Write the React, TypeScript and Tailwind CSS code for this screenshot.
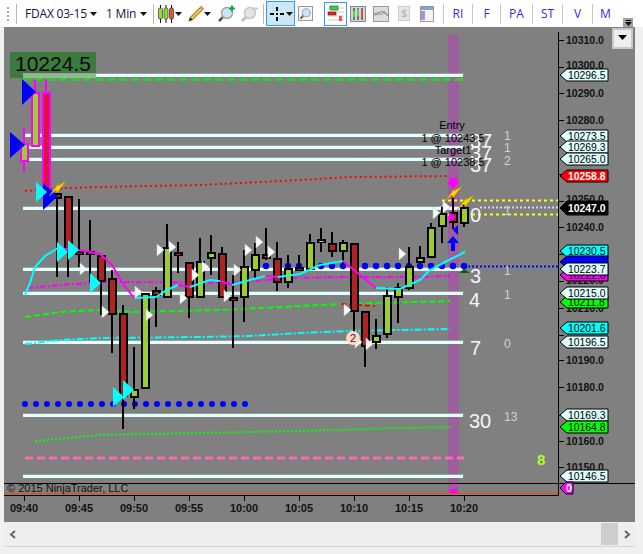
import React from "react";

const GREEN = "#9acd32";
const RED = "#b22222";
// x index, wick top, wick bottom, body top, body bottom, colour
const candles: [number, number, number, number, number, string][] = [
  [3, 193, 277, 193, 199, RED],
  [4, 196, 277, 196, 253, RED],
  [5, 199, 267, 251, 255, RED],
  [6, 220, 282, 251, 255, RED],
  [7, 255, 315, 255, 282, RED],
  [8, 270, 353, 278, 315, RED],
  [9, 305, 429, 313, 397, RED],
  [10, 347, 409, 389, 398, GREEN],
  [11, 293, 389, 293, 389, GREEN],
  [12, 287, 327, 290, 296, RED],
  [13, 224, 298, 247, 298, GREEN],
  [14, 242, 273, 252, 255, RED],
  [15, 262, 318, 262, 298, RED],
  [16, 238, 298, 261, 298, GREEN],
  [17, 235, 275, 252, 259, GREEN],
  [18, 247, 298, 253, 298, RED],
  [19, 275, 348, 297, 298, RED],
  [20, 250, 322, 266, 298, GREEN],
  [21, 243, 278, 254, 271, GREEN],
  [22, 228, 260, 254, 259, RED],
  [23, 242, 291, 258, 283, RED],
  [24, 255, 288, 268, 283, GREEN],
  [25, 255, 268, 267, 270, RED],
  [26, 234, 268, 242, 270, GREEN],
  [27, 228, 252, 239, 242, GREEN],
  [28, 232, 257, 243, 252, RED],
  [29, 240, 265, 242, 252, GREEN],
  [30, 243, 332, 243, 312, RED],
  [31, 311, 367, 311, 347, RED],
  [32, 319, 349, 335, 343, GREEN],
  [33, 287, 338, 295, 335, GREEN],
  [34, 283, 323, 287, 298, GREEN],
  [35, 247, 290, 266, 289, GREEN],
  [36, 246, 263, 257, 263, GREEN],
  [37, 223, 258, 227, 258, GREEN],
  [38, 207, 243, 213, 227, GREEN],
  [39, 196, 229, 212, 223, RED],
  [40, 202, 227, 207, 224, GREEN],
];
const cx = (i: number) => 24 + 11 * i;

const levels = [75, 135, 147, 159, 208, 269, 293, 342, 415, 476];

const whiteArrows: [number, number][] = [
  [160, 250], [172, 247], [83, 269], [195, 275], [205, 267], [105, 312], [138, 292], [149, 315], [183, 298],
  [227, 296], [237, 270], [248, 250], [259, 242], [271, 252], [347, 310], [358, 342], [369, 344], [402, 254],
  [436, 213], [446, 207],
];
const cyanArrows: [number, number][] = [
  [36, 192], [57, 252], [68, 250], [90, 283], [113, 397], [123, 390],
];

const axis: [string, number][] = [
  ["10310.0", 40], ["10300.0", 65], ["10290.0", 93], ["10280.0", 120], ["10250.0", 199], ["10240.0", 227],
  ["10220.0", 280], ["10210.0", 308], ["10190.0", 360], ["10180.0", 387], ["10160.0", 441], ["10150.0", 467],
];
const ticks = [40, 67, 93, 120, 147, 174, 201, 227, 254, 281, 308, 335, 360, 387, 415, 441, 467];

const tags: [string, number, string, string][] = [
  ["10296.5", 75, "#e0ffff", "#000"],
  ["10273.5", 136, "#e0ffff", "#000"],
  ["10269.3", 147, "#e0ffff", "#000"],
  ["10265.0", 159, "#e0ffff", "#000"],
  ["10258.8", 176, "#ff0000", "#fff"],
  ["10247.0", 208, "#000000", "#fff"],
  ["10230.5", 251, "#00ffff", "#000"],
  ["", 262, "#0000ff", "#000"],
  ["10222.0", 275, "#ff00ff", "#000"],
  ["10223.7", 269, "#e0ffff", "#000"],
  ["10211.8", 302, "#00ff00", "#000"],
  ["10215.0", 293, "#e0ffff", "#000"],
  ["10201.6", 328, "#00ffff", "#000"],
  ["10196.5", 342, "#e0ffff", "#000"],
  ["10169.3", 415, "#e0ffff", "#000"],
  ["10164.8", 427, "#00ff00", "#000"],
  ["10146.5", 476, "#e0ffff", "#000"],
];

const times: [string, number][] = [
  ["09:40", 24], ["09:45", 79], ["09:50", 134], ["09:55", 189], ["10:00", 244], ["10:05", 299], ["10:10", 354], ["10:15", 409], ["10:20", 464],
];

const big: [string, number, number][] = [
  ["37", 470, 148], ["37", 470, 160], ["37", 470, 172], ["0", 470, 222], ["3", 470, 283], ["4", 469, 307], ["7", 470, 355], ["30", 469, 428],
];
const small: [string, number, number][] = [
  ["1", 504, 140], ["1", 504, 152], ["2", 504, 165], ["1", 504, 215], ["1", 504, 275], ["1", 504, 299], ["0", 504, 348], ["13", 504, 421],
];

const Bolt = ({ x, y }: { x: number; y: number }) => (
  <polygon
    points={`${x + 17},${y} ${x + 9},${y + 5} ${x + 10},${y + 2} ${x},${y + 15} ${x + 7},${y + 9} ${x + 8},${y + 12}`}
    fill="#ffd700"
    stroke="#b8860b"
    strokeWidth="0.5"
  />
);

const poly = (p: [number, number][]) => p.map((q) => q.join(",")).join(" ");

function Chart() {
  return (
    <svg className="absolute left-0 top-0" width="631" height="495" viewBox="4 27 631 495" fontFamily="'Liberation Sans', Arial, sans-serif">
      {/* order band */}
      <rect x="448" y="35" width="11" height="458" fill="#9c5f9c" />
      <rect x="450" y="489" width="7" height="4" fill="#ff00ff" />

      {/* levels */}
      <rect x="10" y="52" width="86" height="26" fill="#3d7a3d" />
      {levels.map((y) => (
        <g key={y}>
          <rect x="23" y={y - 2} width="441" height="1" fill="#9a9f9f" />
          <rect x="23" y={y - 1} width="440" height="3" fill="#e0ffff" />
        </g>
      ))}
      <rect x="23" y="74" width="73" height="4" fill="#8fb98f" />
      <text x="15" y="71" fontSize="21" fill="#0a0a0a">10224.5</text>

      <line x1="23" x2="464" y1="79.5" y2="79.5" stroke="#32cd32" strokeWidth="3" strokeDasharray="8 4" />
      <line x1="25" x2="464" y1="458" y2="458" stroke="#ff69b4" strokeWidth="3" strokeDasharray="8 4" />
      <line x1="442" x2="558" y1="200.5" y2="200.5" stroke="#ffff00" strokeWidth="2" strokeDasharray="3 3" />
      <line x1="442" x2="558" y1="214.5" y2="214.5" stroke="#ffff00" strokeWidth="2" strokeDasharray="3 3" />
      <line x1="480" x2="558" y1="207.5" y2="207.5" stroke="#d8d8d8" strokeWidth="2" strokeDasharray="2 2" />
      <line x1="464" x2="558" y1="266.5" y2="266.5" stroke="#0000ff" strokeWidth="2" strokeDasharray="2 2" />

      {/* indicators */}
      <polyline points={poly([[25, 191], [66, 188], [100, 187], [200, 185], [300, 180], [350, 177], [450, 176]])} fill="none" stroke="#ff0000" strokeWidth="2" strokeDasharray="2 3" />
      <polyline points={poly([[25, 317], [60, 312], [100, 310], [130, 312], [220, 310], [340, 304], [450, 301]])} fill="none" stroke="#00ff00" strokeWidth="2" strokeDasharray="6 3" />
      <line x1="341" x2="375" y1="304" y2="306" stroke="#ff0000" strokeWidth="2" strokeDasharray="5 3" />
      <polyline points={poly([[25, 344], [60, 340], [100, 338], [200, 337], [250, 336], [300, 333], [350, 331], [450, 329]])} fill="none" stroke="#00ffff" strokeWidth="2" strokeDasharray="7 2 2 2" />
      <polyline points={poly([[35, 441], [100, 435], [200, 433], [300, 431], [400, 428], [452, 427]])} fill="none" stroke="#00ff00" strokeWidth="2" strokeDasharray="2 2" />
      <polyline points={poly([[28, 288], [60, 285], [90, 283], [120, 282], [232, 283], [290, 278], [340, 277], [420, 277], [450, 276]])} fill="none" stroke="#ff00ff" strokeWidth="2" strokeDasharray="6 2 2 2" />

      {/* dots */}
      {Array.from({ length: 21 }, (_, i) => (
        <circle key={i} cx={25 + 11 * i} cy="404" r="3" fill="#0000ff" />
      ))}
      {Array.from({ length: 20 }, (_, i) => (
        <circle key={i} cx={255 + 11 * i} cy="266" r="3.2" fill="#0000ff" />
      ))}

      {/* first three bars with magenta outline */}
      <rect x="23" y="127" width="2" height="45" fill="#ff00ff" />
      <rect x="20" y="143" width="9" height="19" fill="#ff00ff" />
      <rect x="22" y="145" width="5" height="15" fill={GREEN} />
      <rect x="34" y="80" width="2" height="12" fill="#ff00ff" />
      <rect x="31" y="92" width="9" height="55" fill="#ff00ff" />
      <rect x="33" y="94" width="5" height="51" fill={GREEN} />
      <rect x="45" y="80" width="2" height="12" fill="#ff00ff" />
      <rect x="42" y="92" width="9" height="100" fill="#ff00ff" />
      <rect x="44" y="94" width="5" height="100" fill="#dc143c" />

      {/* candles */}
      <g shapeRendering="crispEdges">
        {candles.map(([i, hi, lo, top, bot, c]) => (
          <g key={i}>
            <rect x={cx(i) - 1} y={hi} width="2" height={lo - hi} fill="#000" />
            <rect x={cx(i) - 4} y={top} width="9" height={Math.max(bot - top, 4)} fill="#000" />
            <rect x={cx(i) - 2} y={top + 2} width="5" height={Math.max(bot - top - 4, 1)} fill={c} />
          </g>
        ))}
      </g>

      {/* moving average */}
      <polyline points={poly([[25, 295], [30, 283], [35, 267], [45, 256], [58, 248]])} fill="none" stroke="#00ffff" strokeWidth="2" />
      <polyline points={poly([[58, 248], [85, 251], [100, 254], [112, 265], [122, 282], [134, 298]])} fill="none" stroke="#ff00ff" strokeWidth="2" />
      <polyline points={poly([[135, 298], [156, 297], [167, 290], [178, 285]])} fill="none" stroke="#00ffff" strokeWidth="2" />
      <polyline points={poly([[178, 285], [190, 287]])} fill="none" stroke="#ff00ff" strokeWidth="2" />
      <polyline points={poly([[190, 287], [210, 280], [220, 281]])} fill="none" stroke="#00ffff" strokeWidth="2" />
      <polyline points={poly([[220, 281], [232, 285]])} fill="none" stroke="#ff00ff" strokeWidth="2" />
      <polyline points={poly([[232, 285], [250, 280], [265, 276]])} fill="none" stroke="#00ffff" strokeWidth="2" />
      <polyline points={poly([[266, 276], [278, 277]])} fill="none" stroke="#ff00ff" strokeWidth="2" />
      <polyline points={poly([[278, 277], [300, 274], [320, 265], [343, 261]])} fill="none" stroke="#00ffff" strokeWidth="2" />
      <polyline points={poly([[343, 261], [360, 275], [376, 288]])} fill="none" stroke="#ff00ff" strokeWidth="2" />
      <polyline points={poly([[376, 288], [400, 289], [420, 280], [430, 270], [445, 262], [465, 252]])} fill="none" stroke="#00ffff" strokeWidth="2" />

      {/* markers */}
      <polygon points="22,79 36,92 22,105" fill="#0000ff" />
      <polygon points="10,132 25,145 10,158" fill="#0000ff" />
      <polygon points="43,183 58,196 43,210" fill="#0000ff" />
      {cyanArrows.map(([x, y]) => (
        <polygon key={`${x}-${y}`} points={`${x},${y - 10} ${x + 11},${y} ${x},${y + 10}`} fill="#00ffff" />
      ))}
      {whiteArrows.map(([x, y]) => (
        <polygon key={`${x}-${y}`} points={`${x - 3},${y - 6} ${x + 4},${y} ${x - 3},${y + 6}`} fill="#fafafa" stroke="#c8c8c8" strokeWidth="0.5" />
      ))}
      <Bolt x={49} y={181} />
      <Bolt x={445} y={186} />
      <Bolt x={457} y={195} />
      <polygon points="449,178 457,178 457,182 459,182 453,189 447,182 449,182" fill="#ff00ff" />
      <polygon points="451,251 455,251 455,243 459,243 453,236 447,243 451,243" fill="#0000ff" />
      <polygon points="449,212 456,217 449,222" fill="#ff00ff" />
      <polygon points="458,225 458,235 453,230" fill="#0000ff" />
      <polygon points="459,273 464,269 470,273" fill="#006400" />

      <circle cx="353" cy="338" r="7" fill="#ffdab9" />
      <text x="350" y="342" fontSize="11" fill="#4b0082">2</text>

      {big.map(([t, x, y], i) => (
        <text key={i} x={x} y={y} fontSize="20" fill="#f5f5f5">{t}</text>
      ))}
      {small.map(([t, x, y], i) => (
        <text key={i} x={x} y={y} fontSize="12" fill="#d3d3d3">{t}</text>
      ))}
      {/* trade labels */}
      <g fontSize="11" fill="#000" textAnchor="middle">
        <text x="452" y="129">Entry</text>
        <text x="453" y="142">1 @ 10243.5</text>
        <text x="453" y="154">Target1</text>
        <text x="453" y="166">1 @ 10238.5</text>
      </g>
      <text x="537" y="465" fontSize="15" fontWeight="700" fill="#adff2f">8</text>

      {/* axes */}
      <rect x="558" y="32" width="1" height="464" fill="#000" />
      <rect x="4" y="483" width="631" height="1" fill="#000" />
      <rect x="4" y="495" width="555" height="1" fill="#000" />
      <rect x="5" y="493" width="553" height="1" fill="#ff4500" />
      {ticks.map((y) => (
        <rect key={y} x="559" y={y} width="5" height="1" fill="#000" />
      ))}
      {axis.map(([t, y]) => (
        <text key={t} x="566" y={y + 4} fontSize="10.5" fontWeight="700" fill="#111">{t}</text>
      ))}
      {tags.map(([t, y, bg, fg]) => {
        const h = fg === "#fff" && bg === "#000000" ? 7 : 6;
        return (
          <g key={t + y}>
            <polygon points={`560,${y} 567,${y - h} 608,${y - h} 608,${y + h} 567,${y + h}`} fill={bg} stroke="#000" strokeWidth="1" />
            <text x="568" y={y + 4} fontSize="10.4" fontWeight={fg === "#fff" ? 700 : 400} fill={fg}>{t}</text>
          </g>
        );
      })}
      <polygon points="560,488 566,482 573,482 573,494 566,494" fill="#ff00ff" stroke="#000" strokeWidth="1" />
      <text x="566" y="492" fontSize="11" fontWeight="700" fill="#fff">0</text>

      {times.map(([t, x]) => (
        <g key={t}>
          <rect x={x} y="496" width="1" height="5" fill="#000" />
          <text x={x} y="512" fontSize="11" fontWeight="700" fill="#111" textAnchor="middle">{t}</text>
        </g>
      ))}
      <text x="7" y="492" fontSize="11" fill="#111">© 2015 NinjaTrader, LLC</text>
    </svg>
  );
}

const Caret = () => (
  <svg width="7" height="4" viewBox="0 0 7 4" className="block shrink-0">
    <polygon points="0,0 7,0 3.5,4" fill="#111" />
  </svg>
);

const Magnifier = ({ grey, plus, size = 18 }: { grey?: boolean; plus?: boolean; size?: number }) => (
  <svg width={size} height={size} viewBox="0 0 18 18" className="block shrink-0">
    <line x1="2" y1="16" x2="7" y2="11" stroke={grey ? "#bbb" : "#555"} strokeWidth="2.5" />
    <circle cx="10" cy="8" r="5.5" fill={grey ? "#e2e2e2" : "#cfe3f0"} stroke={grey ? "#c8c8c8" : "#9aa9b3"} strokeWidth="1.5" />
    {plus && <path d="M15 0.5v6M12 3.5h6" stroke="#16a34a" strokeWidth="2" />}
    {grey && <path d="M12 3.5h6" stroke="#c8c8c8" strokeWidth="2" />}
  </svg>
);

function Toolbar() {
  return (
    <div className="relative flex h-[27px] shrink-0 items-center bg-white pl-[7px] text-[12px] text-[#14144a]" style={{ fontFamily: "'Open Sans', 'Noto Sans', sans-serif" }}>
      <div className="mr-[7px] flex h-[14px] w-[2px] flex-col justify-between">
        {[0, 1, 2, 3].map((i) => <div key={i} className="h-[2px] w-[2px] bg-[#aaa]" />)}
      </div>
      <div className="h-[20px] w-px bg-[#b8b8b8]" />
      <span className="ml-[8px] w-[60px] whitespace-nowrap tracking-[-0.2px]">FDAX 03-15</span>
      <span className="ml-[5px]"><Caret /></span>
      <span className="ml-[9px] w-[29px] whitespace-nowrap tracking-[-0.2px]">1 Min</span>
      <span className="ml-[5px]"><Caret /></span>
      <div className="ml-[6px] h-[20px] w-px bg-[#b8b8b8]" />
      <svg width="16" height="18" viewBox="0 0 16 18" className="ml-[4px] shrink-0">
        <path d="M2.5 0v18M8 0v18M13.5 0v18" stroke="#111" strokeWidth="1" />
        <rect x="0.5" y="3" width="4" height="11" rx="1.5" fill="#8fdc35" stroke="#333" strokeWidth="0.7" />
        <rect x="6" y="3" width="4" height="11" rx="1.5" fill="#8fdc35" stroke="#333" strokeWidth="0.7" />
        <rect x="11.5" y="3" width="4" height="11" rx="1.5" fill="#e5533c" stroke="#333" strokeWidth="0.7" />
      </svg>
      <span className="ml-[1px]"><Caret /></span>
      <svg width="16" height="17" viewBox="0 0 17 17" className="ml-[6px] shrink-0">
        <path d="M14 1l2.500 2.500L5 15l-4 1.500L2.500 12.500z" fill="#f5c33b" stroke="#6b5a1e" strokeWidth="1" />
        <path d="M1 16.500l1.500-4 2.500 2.500z" fill="#333" />
        <path d="M14 1l2.500 2.500-1.500 1.500-2.500-2.500z" fill="#e88" />
      </svg>
      <span><Caret /></span>
      <span className="ml-[6px]"><Magnifier plus /></span>
      <span className="ml-[5px]"><Magnifier grey /></span>
      <div className="ml-[5px] h-[20px] w-px bg-[#b8b8b8]" />
      <div className="ml-[2px] flex h-[25px] w-[29px] items-center justify-center gap-[1px] border border-[#3399ff] bg-[#cde6f7]">
        <svg width="16" height="16" viewBox="0 0 16 16" className="shrink-0">
          <path d="M8 1v4M8 11v4M1 8h4M11 8h4" stroke="#000" strokeWidth="2" />
          <rect x="7" y="7" width="2" height="2" fill="#000" />
        </svg>
        <Caret />
      </div>
      <div className="ml-[3px] flex h-[15px] w-[15px] items-center justify-center border border-[#999] bg-[#f4f4f4]"><Magnifier size={13} /></div>
      <div className="ml-[11px] flex h-[24px] w-[23px] items-center justify-center border border-[#3399ff] bg-white">
        <svg width="17" height="17" viewBox="0 0 17 17">
          <path d="M1 3h16M1 7h16M1 11h16M1 15h16" stroke="#ccc" />
          <rect x="3" y="1" width="8" height="4" fill="#4c4" stroke="#151" strokeWidth="0.6" />
          <rect x="1" y="7" width="8" height="3" fill="#e22" stroke="#611" strokeWidth="0.6" />
          <rect x="12" y="11" width="3" height="5" fill="#e55" />
        </svg>
      </div>
      <div className="ml-[3px] flex h-[16px] w-[16px] items-center justify-center border border-[#888] bg-[#d5d5d5]">
        <svg width="14" height="14" viewBox="0 0 14 14">
          <path d="M3 1v12M7 1v12M11 1v12" stroke="#111" />
          <rect x="2" y="4" width="2" height="6" fill="#5c5" />
          <rect x="6" y="2" width="2" height="7" fill="#5c5" />
          <rect x="10" y="4" width="2" height="7" fill="#e44" />
        </svg>
      </div>
      <div className="ml-[7px] flex h-[16px] w-[16px] items-center justify-center border border-[#999] bg-[#ddd]">
        <svg width="14" height="12" viewBox="0 0 14 12">
          <path d="M0 8l4-4 3 3 3-4 4 5" fill="none" stroke="#2b9" />
          <path d="M0 5l4 2 3-4 3 2 4 2" fill="none" stroke="#e66" />
        </svg>
      </div>
      <div className="ml-[9px] flex h-[15px] w-[12px] items-center justify-center border border-[#ccc] bg-[#e6e6e6] text-[10px] font-bold text-[#bbb]">$</div>
      <div className="ml-[10px] flex h-[16px] w-[14px] flex-col border border-[#999] bg-[#f3f3f3]">
        <div className="h-[3px] bg-[#7ba7cf]" />
        <div className="mt-[1px] h-[9px] w-[4px] bg-[#b48be0]" />
      </div>
      <div className="ml-[9px] h-[20px] w-px bg-[#c8c8c8]" />
      {[["RI", "w-[29px]"], ["F", "w-[28px]"], ["PA", "w-[32px]"], ["ST", "w-[30px]"], ["V", "w-[30px]"]].map(([t, w]) => (
        <div key={t} className={`flex items-center ${w}`}>
          <span className="flex-1 text-center text-[#2b2bff]">{t}</span>
          <div className="h-[20px] w-px bg-[#c8c8c8]" />
        </div>
      ))}
      <span className="w-[25px] text-center text-[#2b2bff]">M</span>
      <div className="absolute bottom-0 right-[10px] flex h-[9px] w-[10px] flex-col items-center justify-center gap-[1px] bg-[#a0a0a0]">
        <div className="h-px w-[5px] bg-black" />
        <Caret />
      </div>
    </div>
  );
}

const Chevron = ({ right }: { right?: boolean }) => (
  <svg width="7" height="9" viewBox="0 0 7 9" className="block shrink-0">
    <path d={right ? "M1 1l4 3.500-4 3.500" : "M6 1L2 4.500 6 8"} fill="none" stroke="#666" strokeWidth="2" />
  </svg>
);

export default function App() {
  return (
    <div className="flex h-[554px] w-[643px] flex-col overflow-hidden bg-[#f0f0f0]">
      <Toolbar />
      <div className="flex flex-1 flex-col pl-[4px] pr-[8px] pb-[7px]">
        <div className="relative h-[495px] w-[631px] bg-[#808080]">
          <Chart />
          <div className="absolute right-[2px] top-px flex h-[21px] w-[21px] items-start justify-center border-2 border-[#c8c8c8] bg-[#eeeeee] pt-[5px]">
            <svg width="9" height="5" viewBox="0 0 9 5"><polygon points="0,0 9,0 4.500,5" fill="#000" /></svg>
          </div>
        </div>
        <div className="flex h-[25px] items-center justify-between border-b border-[#d5d5d5] bg-[#eeeeee] pl-[5px] pr-[4px]">
          <Chevron />
          <div className="flex items-center">
            <div className="mr-[6px] h-[22px] w-[17px] bg-[#cdcdcd]" />
            <Chevron right />
          </div>
        </div>
      </div>
    </div>
  );
}
